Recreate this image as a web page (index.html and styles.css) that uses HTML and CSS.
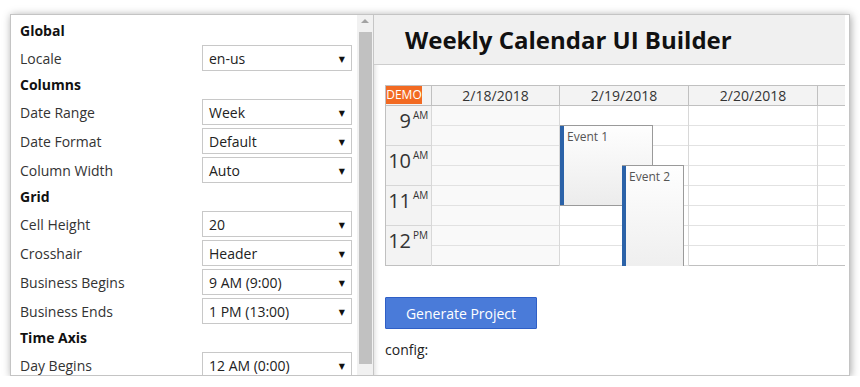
FILE: index.html
```html
<!DOCTYPE html>
<html lang="en">
<head>
<meta charset="utf-8">
<title>Weekly Calendar UI Builder</title>
<link rel="stylesheet" href="styles.css">
</head>
<body>
<div class="window">
  <aside class="settings">
    <div class="settings-scroll">
      <div class="group-title">Global</div>
      <div class="field"><span class="label">Locale</span><div class="select"><span>en-us</span><span class="arrow">▼</span></div></div>
      <div class="group-title">Columns</div>
      <div class="field"><span class="label">Date Range</span><div class="select"><span>Week</span><span class="arrow">▼</span></div></div>
      <div class="field"><span class="label">Date Format</span><div class="select"><span>Default</span><span class="arrow">▼</span></div></div>
      <div class="field"><span class="label">Column Width</span><div class="select"><span>Auto</span><span class="arrow">▼</span></div></div>
      <div class="group-title">Grid</div>
      <div class="field"><span class="label">Cell Height</span><div class="select"><span>20</span><span class="arrow">▼</span></div></div>
      <div class="field"><span class="label">Crosshair</span><div class="select"><span>Header</span><span class="arrow">▼</span></div></div>
      <div class="field"><span class="label">Business Begins</span><div class="select"><span>9 AM (9:00)</span><span class="arrow">▼</span></div></div>
      <div class="field"><span class="label">Business Ends</span><div class="select"><span>1 PM (13:00)</span><span class="arrow">▼</span></div></div>
      <div class="group-title">Time Axis</div>
      <div class="field"><span class="label">Day Begins</span><div class="select"><span>12 AM (0:00)</span><span class="arrow">▼</span></div></div>
    </div>
    <div class="scrollbar">
      <div class="sb-arrow"></div>
      <div class="sb-thumb"></div>
    </div>
  </aside>
  <main class="builder">
    <header class="builder-header"><h1>Weekly Calendar UI Builder</h1></header>
    <div class="builder-body">
      <div class="calendar">
        <div class="cal-head">
          <div class="corner"><span class="demo">DEMO</span></div>
          <div class="day-head w128">2/18/2018</div>
          <div class="day-head">2/19/2018</div>
          <div class="day-head">2/20/2018</div>
          <div class="day-head"></div>
        </div>
        <div class="cal-body">
          <div class="axis">
            <div class="hour"><span class="num">9</span><span class="ampm">AM</span></div>
            <div class="hour"><span class="num">10</span><span class="ampm">AM</span></div>
            <div class="hour"><span class="num">11</span><span class="ampm">AM</span></div>
            <div class="hour"><span class="num">12</span><span class="ampm">PM</span></div>
          </div>
          <div class="day w128 off">
            <div class="cell"></div><div class="cell"></div><div class="cell"></div><div class="cell"></div>
            <div class="cell"></div><div class="cell"></div><div class="cell"></div><div class="cell"></div>
          </div>
          <div class="day">
            <div class="cell"></div><div class="cell"></div><div class="cell"></div><div class="cell"></div>
            <div class="cell"></div><div class="cell"></div><div class="cell"></div><div class="cell"></div>
            <div class="event ev1"><span class="bar"></span><span class="ev-text">Event 1</span></div>
            <div class="event ev2"><span class="bar"></span><span class="ev-text">Event 2</span></div>
          </div>
          <div class="day">
            <div class="cell"></div><div class="cell"></div><div class="cell"></div><div class="cell"></div>
            <div class="cell"></div><div class="cell"></div><div class="cell"></div><div class="cell"></div>
          </div>
          <div class="day">
            <div class="cell"></div><div class="cell"></div><div class="cell"></div><div class="cell"></div>
            <div class="cell"></div><div class="cell"></div><div class="cell"></div><div class="cell"></div>
          </div>
        </div>
      </div>
      <button class="generate" type="button">Generate Project</button>
      <div class="config">config:</div>
    </div>
  </main>
</div>
</body>
</html>
```
FILE: styles.css
```css
* { box-sizing: border-box; }
html, body { margin: 0; padding: 0; background: #fff; }
body {
  font-family: "Open Sans", "Noto Sans", "DejaVu Sans", sans-serif;
  font-size: 14px;
  color: #333;
}
.window {
  margin: 14px 0 0 10px;
  width: 840px;
  height: 362px;
  border: 1px solid #c4c4c4;
  box-shadow: 1px 1px 8px rgba(0,0,0,0.35);
  display: flex;
  overflow: hidden;
  background: #fff;
}
.settings {
  width: 362px;
  flex: none;
  display: flex;
  height: 100%;
}
.settings-scroll {
  flex: 1;
  overflow: hidden;
  padding: 2px 5px 0 9px;
}
.group-title {
  height: 28px;
  line-height: 28px;
  font-weight: 700;
  color: #111;
}
.field {
  display: flex;
  align-items: center;
  height: 26px;
}
.field + .field { margin-top: 3px; }
.label { flex: 1; color: #333; }
.select {
  width: 150px;
  height: 26px;
  border: 1px solid #c8c8c8;
  background: #fff;
  display: flex;
  align-items: center;
  justify-content: space-between;
  padding: 0 6px 0 6px;
  color: #222;
}
.arrow { font-size: 8px; color: #111; }
.scrollbar {
  width: 16px;
  flex: none;
  background: #f1f1f1;
  display: flex;
  flex-direction: column;
  align-items: center;
  padding-top: 4px;
}
.sb-arrow {
  width: 0; height: 0;
  border-left: 4px solid transparent;
  border-right: 4px solid transparent;
  border-bottom: 4px solid #a3a3a3;
}
.sb-thumb {
  margin-top: 9px;
  width: 13px;
  height: 332px;
  background: #c1c1c1;
}
.builder {
  flex: 1;
  min-width: 0;
  border-left: 1px solid #c6c6c6;
  box-shadow: inset 5px 0 5px -4px rgba(0,0,0,0.15);
  overflow: hidden;
}
.builder-header {
  margin-right: 4px;
  height: 50px;
  background: #f0f0f0;
  border-bottom: 1px solid #cdcdcd;
  padding-left: 31px;
}
.builder-header h1 {
  margin: 0;
  font-size: 24px;
  line-height: 49px;
  font-weight: 700;
  color: #111;
}
.builder-body {
  margin-right: 4px;
  overflow: hidden;
  padding: 20px 0 0 11px;
}
.calendar {
  width: 600px;
  border-top: 1px solid #c0c0c0;
  border-left: 1px solid #c0c0c0;
}
.cal-head {
  display: flex;
  height: 20px;
  border-bottom: 1px solid #c0c0c0;
  background: #f3f3f3;
}
.corner { width: 45px; flex: none; }
.demo {
  display: block;
  width: 36px;
  height: 18px;
  line-height: 18px;
  background: #f26a22;
  color: #fff;
  font-size: 12px;
  text-align: center;
}
.day-head {
  width: 129px;
  flex: none;
  border-left: 1px solid #c0c0c0;
  text-align: center;
  line-height: 19px;
  color: #333;
}
.w128 { width: 128px; }
.cal-body { display: flex; }
.axis { width: 45px; flex: none; background: #f3f3f3; }
.hour {
  height: 40px;
  border-bottom: 1px solid #d6d6d6;
  display: flex;
  justify-content: flex-end;
  padding-right: 3px;
  color: #333;
}
.hour:last-child { border-bottom-color: #c0c0c0; }
.num { font-size: 20px; line-height: 30px; }
.ampm { font-size: 10px; line-height: 18px; margin-left: 2px; width: 15px; }
.day {
  width: 129px;
  flex: none;
  border-left: 1px solid #d8d8d8;
  position: relative;
  overflow: hidden;
  background: #fff;
}
.day.w128 { width: 128px; }
.day.off { background: #f9f9f9; }
.cell { height: 20px; border-bottom: 1px solid #e2e2e2; }
.cell:last-child { border-bottom-color: #c0c0c0; }
.event {
  position: absolute;
  border: 1px solid #9a9a9a;
  border-left: none;
  background: linear-gradient(#fefefe, #ececec);
  display: flex;
  align-items: flex-start;
}
.bar { width: 4px; align-self: stretch; background: #2b62a8; flex: none; }
.ev-text { font-size: 12px; color: #555; padding: 2px 0 0 3px; }
.ev1 { left: 0; top: 19px; width: 93px; height: 81px; }
.ev2 { left: 62px; top: 59px; width: 62px; height: 120px; }
.generate {
  margin-top: 31px;
  width: 152px;
  height: 32px;
  border: 1px solid #2f5fc6;
  border-radius: 1px;
  background: #4a7bd9;
  color: #fff;
  font-family: "Open Sans", "Noto Sans", sans-serif;
  font-size: 14px;
  display: block;
  padding: 0;
}
.config {
  margin-top: 11px;
  line-height: 20px;
  color: #222;
}
```
